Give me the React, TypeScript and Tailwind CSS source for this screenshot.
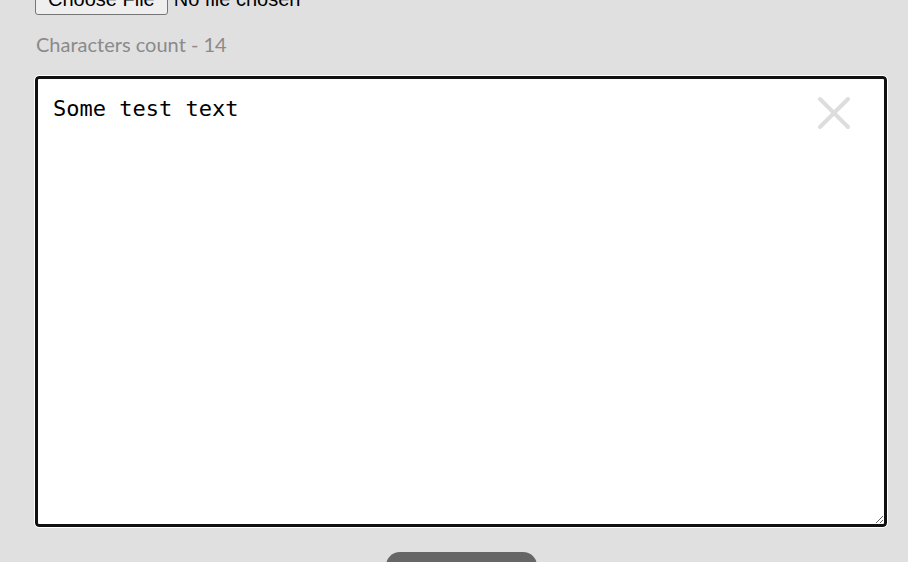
import { useState } from "react";

export default function App() {
  const [text, setText] = useState("Some test text");

  return (
    <div className="h-[562px] w-full overflow-hidden bg-[#e0e0e0]">
      <div className="ml-[35px] w-[852px] -mt-[17px]">
        <input
          type="file"
          className="block text-[20px] text-black [font-family:Arial,'Liberation_Sans',sans-serif] file:mr-[6px] file:rounded-[3px] file:border file:border-[#767676] file:bg-[#efefef] file:px-[12px] file:py-0 file:text-[20px] file:text-black"
        />
        <p className="mt-[17px] pl-[1px] text-[20px] leading-[24px] text-[#8a8a8a] [font-family:Lato,'Noto_Sans',sans-serif]">
          Characters count - {text.length}
        </p>
        <div className="relative mt-[20px]">
          <textarea
            value={text}
            onChange={(e) => setText(e.target.value)}
            className="block h-[451px] w-full rounded-[4px] border-[3px] border-[#111] bg-white px-[15px] pt-[15px] pb-[13px] text-[22px] leading-[30px] text-black outline outline-[1.5px] outline-white [font-family:'DejaVu_Sans_Mono','Liberation_Mono',monospace]"
          />
          <button className="absolute right-[36px] top-[20px] text-[#dddddd]">
            <svg width="34" height="34" viewBox="0 0 34 34" fill="none" stroke="currentColor" strokeWidth={4} strokeLinecap="round">
              <path d="M3 3l28 28M31 3L3 31" />
            </svg>
          </button>
        </div>
        <div className="mt-[25px] flex justify-center">
          <button className="h-[40px] w-[151px] rounded-t-[14px] bg-[#666666] text-white" />
        </div>
      </div>
    </div>
  );
}
